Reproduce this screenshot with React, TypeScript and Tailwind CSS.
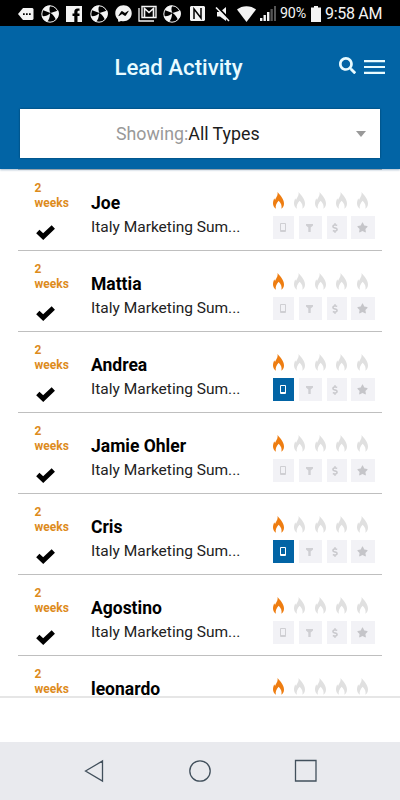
import type { ReactNode } from "react";
import { FaSearch, FaStar, FaDollarSign, FaFacebookMessenger } from "react-icons/fa";

const LEADS = [
  { name: "Joe", phone: false },
  { name: "Mattia", phone: false },
  { name: "Andrea", phone: true },
  { name: "Jamie Ohler", phone: false },
  { name: "Cris", phone: true },
  { name: "Agostino", phone: false },
  { name: "leonardo", phone: false },
];

export default function App() {
  return (
    <div className="flex h-[800px] w-[400px] flex-col overflow-hidden bg-white font-[Roboto,sans-serif]">
      <StatusBar />

      <header className="z-10 flex h-[143px] shrink-0 flex-col bg-[#0264a5] shadow-[0_1px_2px_rgba(0,60,110,0.35)]">
        <div className="flex h-[83px] items-center pl-[114.500px] pr-[15px] pb-px">
          <h1 className="w-[224px] whitespace-nowrap text-[22.200px] font-medium leading-none text-[#e9fbff]">
            Lead Activity
          </h1>
          <FaSearch className="-mt-[3px] h-[17px] w-[17px] text-[#e9fbff]" />
          <svg viewBox="0 0 21 14" className="ml-auto h-[14px] w-[21px]" fill="#e9fbff">
            <path d="M0 0h21v2.200H0zM0 5.900h21v2.200H0zM0 11.800h21v2.200H0z" />
          </svg>
        </div>
        <div className="mx-5 flex h-[49px] items-center bg-white pl-24 pr-[14px] text-[17.800px] shadow-[0_0_2px_rgba(0,0,0,0.4)]">
          <span className="pt-px text-[#999]">Showing:</span>
          <span className="pt-px text-[#1c1c1c]">All Types</span>
          <svg viewBox="0 0 10 6" className="ml-auto h-[6px] w-[10px]" fill="#999">
            <path d="M0 0h10L5 6z" />
          </svg>
        </div>
      </header>

      <main className="min-h-0 flex-1 overflow-hidden px-[18px]">
        <div className="border-t border-[#bfbfbf]">
          {LEADS.map((lead) => (
            <LeadRow key={lead.name} name={lead.name} phone={lead.phone} />
          ))}
        </div>
      </main>

      <div className="h-[46px] shrink-0 border-t-2 border-[#e6e6e6] bg-white" />

      <nav className="flex h-[58px] shrink-0 items-center bg-[#e9eaee] pl-[84px] pr-[83px]">
        <svg viewBox="0 0 233 24" className="h-6 w-[233px]" fill="none" stroke="#42505c" strokeWidth="1.3">
          <path d="M1.500 12 18.500 2v20z" />
          <circle cx="116" cy="12" r="10.200" />
          <path d="M211.500 1.500h20.500v20.500h-20.500z" />
        </svg>
      </nav>
    </div>
  );
}

function LeadRow({ name, phone }: { name: string; phone: boolean }) {
  return (
    <div className="flex h-[81px] border-b border-[#bfbfbf] pl-4">
      <div className="w-[57px] pl-[0.500px] pt-[11px] text-[12px] font-bold leading-[14.500px] text-[#dd8b1c]">
        <p>
          2<br />
          weeks
        </p>
        <svg viewBox="0 0 19 15" className="mt-[15px] ml-px h-[15px] w-[19px]" fill="none" stroke="#000" strokeWidth="4.800">
          <path d="M1.800 6.600l5.400 5L17.300 2" />
        </svg>
      </div>
      <div className="w-[182px] whitespace-nowrap pt-[21px]">
        <h2 className="text-[17.500px] font-bold leading-6 text-black">{name}</h2>
        <p className="text-[15.500px] leading-[25px] text-[#222]">Italy Marketing Sum...</p>
      </div>
      <div className="pt-[22px]">
        <div className="flex gap-[10px]">
          {[0, 1, 2, 3, 4].map((n) => (
            <Flame key={n} lit={n === 0} />
          ))}
        </div>
        <div className="mt-[7px] flex">
          <Badge className={phone ? "w-[21px] bg-[#0264a5] text-white" : "w-[21px] bg-[#f2f2f6] text-[#cfcfd3]"}>
            <svg viewBox="0 0 6 9" className="-ml-px h-[9px] w-[6px]" fill="none" stroke="currentColor">
              <path d="M.5.5h5v8h-5z" />
              <path d="M0 7.500h6" />
            </svg>
          </Badge>
          <Badge className="ml-[5px] w-[23px] bg-[#f2f2f6] text-[#cfcfd3]">
            <svg viewBox="0 0 7 8" className="-ml-[2px] h-2 w-[7px]" fill="currentColor">
              <path d="M0 0h7v1.500L4.700 3.500V8H2.300V3.500L0 1.500z" />
            </svg>
          </Badge>
          <Badge className="ml-[5px] w-[20px] bg-[#f2f2f6] text-[#c9c9cd]">
            <FaDollarSign className="-ml-[4px] h-[10px] w-[10px]" />
          </Badge>
          <Badge className="ml-1 w-[24px] bg-[#f2f2f6] text-[#c5c5c9]">
            <FaStar className="-ml-px h-[11px] w-[11px]" />
          </Badge>
        </div>
      </div>
    </div>
  );
}

function Flame({ lit }: { lit: boolean }) {
  return (
    <svg
      viewBox="0 0 12 17"
      preserveAspectRatio="none"
      className={`h-[17px] w-[11px] ${lit ? "text-[#ee7d11]" : "text-[#e0e0e0]"}`}
      fill="currentColor"
    >
      <path d="M4.900 0C7.800 3.200 12 7 12 11.500c0 2.300-1 4.200-2.800 5.300.6-3-.2-5.400-3-8-2.400 2.400-3.800 4.800-3.100 8C1.300 15.700 0 13.700 0 11.500c0-2 .6-3.700 1.400-5.200.2 1 .5 1.300 1 1.500C3.300 5.500 5.700 3.500 4.900 0z" />
    </svg>
  );
}

function Badge({ className, children }: { className: string; children: ReactNode }) {
  return <div className={`flex h-[23px] items-center justify-center ${className}`}>{children}</div>;
}

function StatusBar() {
  return (
    <div className="flex h-[26px] shrink-0 items-center bg-black pl-[18px] pt-px text-[#f4f4f4]">
      <svg viewBox="0 0 16 14" className="h-[14px] w-4" fill="currentColor">
        <path d="M5 1h9.500l1 1v10l-1 1H5L0 7z" />
        <path d="M5 6.300h1.700v1.600H5zM8 6.300h1.700v1.600H8zM11 6.300h1.700v1.600H11z" fill="#000" />
      </svg>
      <Ball className="ml-[7px]" />
      <svg viewBox="0 0 16 16" className="ml-[7px] h-4 w-4" fill="currentColor">
        <path d="M0 0h16v16h-4.500V10h2V7.500h-2V6c0-.8.400-1.200 1.200-1.200H13.500V2.500h-2c-2.200 0-3.200 1.300-3.200 3.200v1.800H6.500V10h1.800v6H0z" />
      </svg>
      <Ball className="ml-2" />
      <FaFacebookMessenger className="ml-[7px] h-[17px] w-[17px]" />
      <svg viewBox="0 0 19 17" className="ml-[6px] h-[17px] w-[19px]" fill="none" stroke="currentColor">
        <path d="M1 3v13h15" strokeWidth="1.300" />
        <path d="M4 1.500h14v11H4z" strokeWidth="1.400" />
        <path d="M6.500 12V3.500L11 7.500l4.500-4V12" strokeWidth="1.600" />
      </svg>
      <Ball className="ml-[6px]" />
      <svg viewBox="0 0 15 15" className="ml-[9px] h-[15px] w-[15px]">
        <path d="M0 1 1 0h13l1 1v13l-1 1H1l-1-1z" fill="#f4f4f4" />
        <path d="M4 13V3l7 9V2" fill="none" stroke="#000" strokeWidth="1.500" />
      </svg>
      <svg viewBox="0 0 16 16" className="ml-[10px] h-4 w-4" fill="currentColor">
        <path d="M2 6h3l6-5v14L5 10.500H2z" />
        <path d="M2 .500 15 14" fill="none" stroke="#000" strokeWidth="2" />
        <path d="M1 1.500 14 15" fill="none" stroke="currentColor" strokeWidth="1.600" />
      </svg>
      <svg viewBox="0 0 19 16" className="ml-[6px] h-4 w-[19px]" fill="currentColor">
        <path d="M0 3.500C5-1 14-1 19 3.500L9.500 16z" />
      </svg>
      <svg viewBox="0 0 16 15" className="ml-[4px] h-[15px] w-4" fill="currentColor">
        <path d="M0 12h2.400v3H0zM3.500 9h2.400v6H3.500zM7 6h2.400v9H7z" />
        <path d="M10.500 3h2.300v12h-2.300zM14 0h2v15h-2z" fill="#555" />
      </svg>
      <span className="ml-1 w-[27px] whitespace-nowrap text-[14.300px] tracking-[-0.200px]">90%</span>
      <svg viewBox="0 0 10 16" className="ml-1 h-4 w-[10px]" fill="currentColor">
        <path d="M3 0h4v1.500h3V16H0V1.500h3z" />
      </svg>
      <span className="ml-1 whitespace-nowrap text-[16px] tracking-[-0.300px]">9:58 AM</span>
    </div>
  );
}

function Ball({ className }: { className: string }) {
  return (
    <svg viewBox="0 0 18 18" className={`h-[18px] w-[18px] shrink-0 ${className}`}>
      <circle cx="9" cy="9" r="8.200" fill="#000" stroke="#f4f4f4" strokeWidth="1" />
      <path
        d="M9.500 8 1.500 5A8.500 8.500 0 0 1 9.500.6C8 3 8.200 5.500 9.500 8zM9.500 8l7.800-2.500a8.500 8.500 0 0 1-2.500 9.300C14 12 12 9.500 9.500 8zM9 8.500C9 12 8 15 6 17A8.500 8.500 0 0 1 .8 11C4 11.500 7 10.500 9 8.500z"
        fill="#f4f4f4"
      />
    </svg>
  );
}
